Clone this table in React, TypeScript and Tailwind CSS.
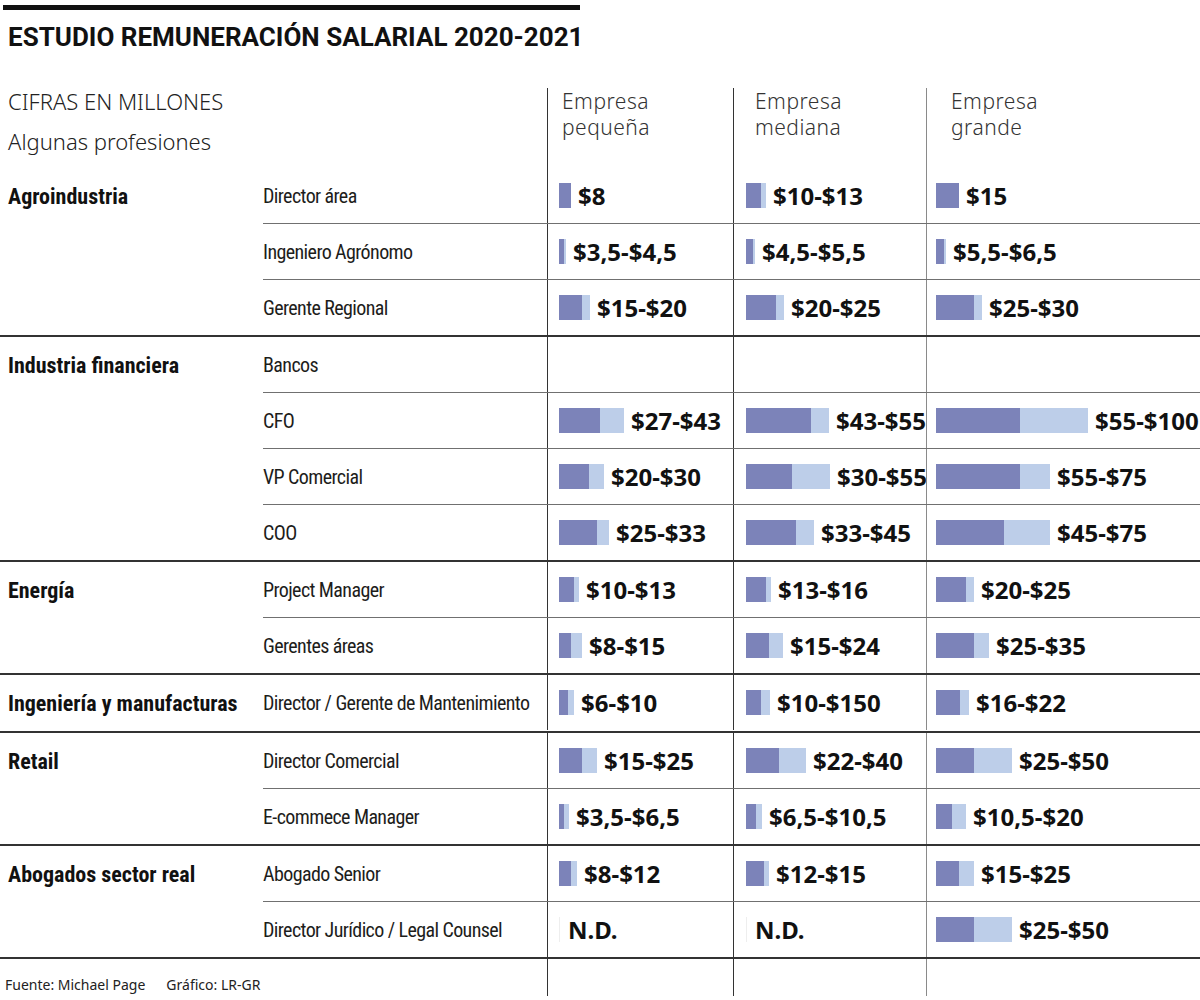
import React from "react";

type Cell = { lo: number; hi: number; text: string } | "nd" | null;

const SCALE = 1.52;

const fmt = (n: number) => `$${String(n).replace(".", ",")}`;
const c = (lo: number, hi: number, text?: string): Cell => ({
  lo,
  hi,
  text: text ?? `${fmt(lo)}-${fmt(hi)}`,
});

const groups: { name: string; rows: { label: string; cells: Cell[] }[] }[] = [
  {
    name: "Agroindustria",
    rows: [
      { label: "Director área", cells: [c(8, 8, "$8"), c(10, 13), c(15, 15, "$15")] },
      { label: "Ingeniero Agrónomo", cells: [c(3.5, 4.5), c(4.5, 5.5), c(5.5, 6.5)] },
      { label: "Gerente Regional", cells: [c(15, 20), c(20, 25), c(25, 30)] },
    ],
  },
  {
    name: "Industria financiera",
    rows: [
      { label: "Bancos", cells: [null, null, null] },
      { label: "CFO", cells: [c(27, 43), c(43, 55), c(55, 100)] },
      { label: "VP Comercial", cells: [c(20, 30), c(30, 55), c(55, 75)] },
      { label: "COO", cells: [c(25, 33), c(33, 45), c(45, 75)] },
    ],
  },
  {
    name: "Energía",
    rows: [
      { label: "Project Manager", cells: [c(10, 13), c(13, 16), c(20, 25)] },
      { label: "Gerentes áreas", cells: [c(8, 15), c(15, 24), c(25, 35)] },
    ],
  },
  {
    name: "Ingeniería y manufacturas",
    rows: [
      {
        label: "Director / Gerente de Mantenimiento",
        cells: [c(6, 10), c(10, 16, "$10-$150"), c(16, 22)],
      },
    ],
  },
  {
    name: "Retail",
    rows: [
      { label: "Director Comercial", cells: [c(15, 25), c(22, 40), c(25, 50)] },
      { label: "E-commece Manager", cells: [c(3.5, 6.5), c(6.5, 10.5), c(10.5, 20)] },
    ],
  },
  {
    name: "Abogados sector real",
    rows: [
      { label: "Abogado Senior", cells: [c(8, 12), c(12, 15), c(15, 25)] },
      { label: "Director Jurídico / Legal Counsel", cells: ["nd", "nd", c(25, 50)] },
    ],
  },
];

// ancho y padding de cada columna de empresa
const cols = [
  "w-[186px] border-l border-[#333] pl-[11px]",
  "w-[193px] border-l border-[#333] pl-3",
  "flex-1 border-l border-[#8a8a8a] pl-[9px]",
];

const narrow = "font-['Liberation_Sans_Narrow','Roboto_Condensed','DejaVu_Sans_Condensed',Roboto,sans-serif]";

const ValueCell = ({ cell, className }: { cell: Cell; className: string }) => (
  <div className={`flex items-center ${className}`}>
    {cell === "nd" && (
      <>
        <div className="w-px h-[25px] bg-[#eeeeee]" />
        <span className="ml-[8px] text-[24px] font-bold leading-none text-[#111]">N.D.</span>
      </>
    )}
    {cell && cell !== "nd" && (
      <>
        <div className="flex h-[25px] shrink-0">
          <div className="bg-[#7c83b9]" style={{ width: Math.round(cell.lo * SCALE) }} />
          <div className="bg-[#bdcee9]" style={{ width: Math.round((cell.hi - cell.lo) * SCALE) }} />
        </div>
        <span className="ml-[7px] text-[24px] font-bold leading-none text-[#111] whitespace-nowrap">
          {cell.text}
        </span>
      </>
    )}
  </div>
);

export default function App() {
  return (
    <div className="w-[1200px] h-[1000px] bg-white overflow-hidden font-['Noto_Sans',sans-serif] text-[#1d1d1b]">
      <div className="ml-[3px] mt-[5px] w-[577px] h-[5px] bg-[#111]" />
      <h1 className="mt-[11px] pl-2 font-['Roboto',sans-serif] text-[26px] leading-[32px] font-bold text-[#111] whitespace-nowrap">
        ESTUDIO REMUNERACIÓN SALARIAL 2020-2021
      </h1>

      {/* cabecera */}
      <div className="flex h-[80px] mt-[35px]">
        <div className="w-[547px] pl-2 font-light text-[22px] leading-[26px] text-[#222]">
          <div>CIFRAS EN MILLONES</div>
          <div className="mt-[14px]">Algunas profesiones</div>
        </div>
        <div className={`${cols[0]} pl-[14px] font-light text-[21px] tracking-[0.5px] leading-[26px] text-[#333]`}>
          Empresa
          <br />
          pequeña
        </div>
        <div className={`${cols[1]} pl-[21px] font-light text-[21px] tracking-[0.5px] leading-[26px] text-[#333]`}>
          Empresa
          <br />
          mediana
        </div>
        <div className={`${cols[2]} pl-[24px] font-light text-[21px] tracking-[0.5px] leading-[26px] text-[#333]`}>
          Empresa
          <br />
          grande
        </div>
      </div>

      {groups.map((g) => (
        <div key={g.name} className="flex border-b-2 border-[#333]">
          <div className="w-[263px] shrink-0">
            <div className={`h-[56px] flex items-center pl-2 ${narrow} text-[22px] font-bold text-[#111] whitespace-nowrap`}>
              {g.name}
            </div>
          </div>
          <div className="flex-1 flex flex-col">
            {g.rows.map((r, i) => {
              const last = i === g.rows.length - 1;
              return (
                <div
                  key={r.label}
                  className={`flex ${last ? "h-[55px]" : "h-[56px] border-b border-[#707070]"}`}
                >
                  <div className={`w-[284px] shrink-0 flex items-center ${narrow} text-[20px] tracking-[-0.6px] text-[#1d1d1b] whitespace-nowrap`}>
                    {r.label}
                  </div>
                  {r.cells.map((cell, j) => (
                    <ValueCell key={j} cell={cell} className={cols[j]} />
                  ))}
                </div>
              );
            })}
          </div>
        </div>
      ))}

      {/* pie */}
      <div className="flex h-[37px]">
        <div className="w-[547px] pl-[5px] pt-[16px] text-[14px] leading-[20px] text-[#222] whitespace-nowrap">
          Fuente: Michael Page<span className="ml-[21px]">Gráfico: LR-GR</span>
        </div>
        <div className={cols[0]} />
        <div className={cols[1]} />
        <div className={cols[2]} />
      </div>
    </div>
  );
}
